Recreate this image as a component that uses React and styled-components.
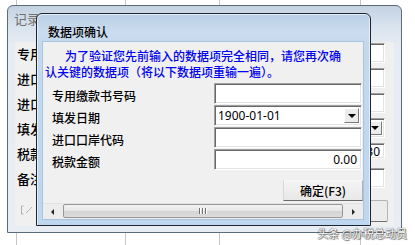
import React from "react";
import styled, { createGlobalStyle } from "styled-components";

const GlobalStyle = createGlobalStyle`
  html, body { margin: 0; padding: 0; background: #ffffff; }
  body { font-family: "Noto Sans CJK SC", "Noto Sans", sans-serif; }
  * { box-sizing: border-box; }
`;

const Stage = styled.div`
  position: relative;
  width: 415px;
  height: 245px;
  overflow: hidden;
  background: #ffffff;
`;

const Sheet = styled.div`
  display: flex;
  height: 100%;
`;

const SheetCol = styled.div`
  width: ${(p) => p.$w}px;
  height: 100%;
  border-right: ${(p) => (p.$last ? "none" : "1px solid #c6c6c6")};
  flex: ${(p) => (p.$last ? "1" : "none")};
`;

/* ---------- outer window ---------- */
const OuterWindow = styled.div`
  position: absolute;
  left: 7px;
  top: 5px;
  width: 395px;
  height: 228px;
  border: 1px solid #5d6c7b;
  border-radius: 6px 6px 0 0;
  background: linear-gradient(180deg, #c3d2e2 0px, #d9e3ee 20px, #e6ecf3 40px, #e8edf3 100%);
  display: flex;
  flex-direction: column;
`;

const OuterTitle = styled.div`
  height: 36px;
  padding: 5px 0 0 6px;
  font-size: 13px;
  line-height: 16px;
  color: #6f6f6f;
`;

const OuterBody = styled.div`
  flex: 1;
  margin: 0 7px 6px 7px;
  background: #f0f0f0;
  display: flex;
  flex-direction: column;
  padding: 1px 9px 0 2px;
`;

const OuterRows = styled.div`
  display: grid;
  grid-template-columns: 60px 1fr;
  grid-auto-rows: 20px;
  row-gap: 5px;
`;

const OuterLabel = styled.div`
  font-size: 13px;
  font-weight: 500;
  line-height: 20px;
  color: #000;
  padding-top: 1px;
`;

const OuterFoot = styled.div`
  margin-top: 12px;
  display: flex;
  align-items: flex-start;
  justify-content: space-between;
  margin-right: -3px;
`;

const FootIcon = styled.svg`
  margin: 5px 0 0 3px;
`;

const OuterButton = styled.div`
  width: 90px;
  height: 22px;
  background: #ececec;
  border: 1px solid #b4b4b4;
  border-bottom-color: #707070;
  border-radius: 2px;
`;

/* ---------- shared fields ---------- */
const Field = styled.div`
  position: relative;
  height: ${(p) => p.$h || 21}px;
  background: #ffffff;
  border-top: 1px solid #a0a0a0;
  border-left: 1px solid #a0a0a0;
  border-right: 1px solid #ffffff;
  border-bottom: 1px solid #ffffff;
  box-shadow: inset 1px 1px 0 #696969, inset -1px -1px 0 #e3e3e3;
  display: flex;
  align-items: center;
  justify-content: ${(p) => (p.$right ? "flex-end" : "flex-start")};
  padding: 0 ${(p) => (p.$right ? 4 : 3)}px 0 3px;
  font-family: "Noto Sans", "Noto Sans CJK SC", sans-serif;
  font-size: 12px;
  color: #000;
`;

const DropButton = styled.div`
  position: absolute;
  right: 2px;
  top: 2px;
  bottom: 2px;
  width: 15px;
  background: #ececec;
  border-top: 1px solid #ffffff;
  border-left: 1px solid #ffffff;
  border-right: 1px solid #7a7a7a;
  border-bottom: 1px solid #7a7a7a;
  display: flex;
  align-items: center;
  justify-content: center;
`;

const Arrow = styled.span`
  width: 0;
  height: 0;
  border-left: 4px solid transparent;
  border-right: 4px solid transparent;
  border-top: 4px solid #000;
`;

/* ---------- dialog ---------- */
const Dialog = styled.div`
  position: absolute;
  left: 36px;
  top: 13px;
  width: 335px;
  height: 213px;
  border: 1px solid #1c2531;
  border-radius: 6px 6px 0 0;
  background: linear-gradient(180deg, #b9cfe6 0px, #cbdcee 18px, #c4d9ee 30px, #bed6ee 100%);
  display: flex;
  flex-direction: column;
  box-shadow: inset 1px 1px 0 #e3eef9, inset -1px 0 0 #e3eef9;
`;

const DialogTitle = styled.div`
  height: 28px;
  padding: 10px 0 0 11px;
  font-size: 12px;
  font-weight: 500;
  line-height: 16px;
  color: #000;
`;

const DialogClient = styled.div`
  margin: 0 7px 6px 6px;
  flex: 1;
  display: flex;
  flex-direction: column;
  background: #f0f0f0;
  box-shadow: 0 0 0 1px #a8c4df;
`;

const DialogBody = styled.div`
  height: 161px;
  display: flex;
  flex-direction: column;
`;

const Notice = styled.p`
  margin: 6px 0 0 0;
  padding-left: 2px;
  width: 304px;
  text-indent: 20px;
  font-size: 12px;
  font-weight: 500;
  line-height: 16px;
  color: #0000f0;
`;

const Form = styled.div`
  margin-top: 3px;
  display: grid;
  grid-template-columns: 162px 148px;
  grid-auto-rows: 21px;
  row-gap: 1px;
  padding-left: 9px;
`;

const FormLabel = styled.div`
  font-size: 12px;
  font-weight: 500;
  line-height: 16px;
  padding-top: 5px;
  color: #000;
`;

const Actions = styled.div`
  margin-top: 10px;
  display: flex;
  justify-content: flex-end;
`;

const Button = styled.div`
  width: 80px;
  height: 21px;
  display: flex;
  align-items: center;
  justify-content: center;
  font-size: 12px;
  font-weight: 500;
  color: #000;
  background: linear-gradient(180deg, #f4f4f4, #e8e8e8);
  border-top: 1px solid #f8f8f8;
  border-left: 1px solid #d8d8d8;
  border-right: 1px solid #b0b0b0;
  border-bottom: 1px solid #6a6a6a;
`;

const ScrollBar = styled.div`
  height: 16px;
  display: flex;
  align-items: stretch;
  background: #ececec;
  border-top: 1px solid #e2e2e2;
`;

const ScrollArrow = styled.div`
  width: 19px;
  display: flex;
  align-items: center;
  justify-content: center;
`;

const TriLeft = styled.span`
  width: 0;
  height: 0;
  border-top: 3px solid transparent;
  border-bottom: 3px solid transparent;
  border-right: 3px solid #222;
`;

const TriRight = styled.span`
  width: 0;
  height: 0;
  border-top: 3px solid transparent;
  border-bottom: 3px solid transparent;
  border-left: 3px solid #222;
`;

const Thumb = styled.div`
  flex: 1;
  margin: 0 1px 1px 1px;
  border: 1px solid #979797;
  border-radius: 2px;
  background: linear-gradient(180deg, #f2f2f2 0%, #e6e6e6 50%, #d4d4d4 51%, #dcdcdc 100%);
  display: flex;
  align-items: center;
  justify-content: center;
  gap: 1px;
`;

const Grip = styled.span`
  width: 1px;
  height: 6px;
  background: #707070;
  box-shadow: 1px 0 0 #ffffff;
  margin-right: 1px;
`;

const Watermark = styled.div`
  position: absolute;
  right: 8px;
  bottom: 6px;
  font-size: 11px;
  line-height: 12px;
  color: #ffffff;
  text-shadow: 0 0 1px #555, 0 0 1px #555, 1px 1px 1px #777;
  white-space: nowrap;
`;

const rowsOuter = ["专用", "进口", "进口", "填发", "税款", "备注"];

export default function App() {
  return (
    <>
      <GlobalStyle />
      <Stage>
        <Sheet>
          <SheetCol $w={17} />
          <SheetCol $w={109} />
          <SheetCol $w={94} />
          <SheetCol $w={141} />
          <SheetCol $last />
        </Sheet>

        <OuterWindow>
          <OuterTitle>记录信息</OuterTitle>
          <OuterBody>
            <OuterRows>
              {rowsOuter.map((l, i) => (
                <React.Fragment key={i}>
                  <OuterLabel>{l}</OuterLabel>
                  <Field $h={i === 4 ? 16 : 20} $right={i === 4}>
                    {i === 4 ? "130" : null}
                    {i === 3 ? (
                      <DropButton>
                        <Arrow />
                      </DropButton>
                    ) : null}
                  </Field>
                </React.Fragment>
              ))}
            </OuterRows>
            <OuterFoot>
              <FootIcon width="14" height="10" viewBox="0 0 14 10">
                <path d="M3.5 1 H1.5 V9 H3.5" fill="none" stroke="#b0b0b0" strokeWidth="1" />
                <path d="M6 8 L12 2" stroke="#b8b8b8" strokeWidth="1" />
              </FootIcon>
              <OuterButton />
            </OuterFoot>
          </OuterBody>
        </OuterWindow>

        <Dialog>
          <DialogTitle>数据项确认</DialogTitle>
          <DialogClient>
            <DialogBody>
              <Notice>
                为了验证您先前输入的数据项完全相同，请您再次确认关键的数据项（将以下数据项重输一遍）。
              </Notice>
              <Form>
                <FormLabel>专用缴款书号码</FormLabel>
                <Field />
                <FormLabel>填发日期</FormLabel>
                <Field>
                  1900-01-01
                  <DropButton>
                    <Arrow />
                  </DropButton>
                </Field>
                <FormLabel>进口口岸代码</FormLabel>
                <Field />
                <FormLabel>税款金额</FormLabel>
                <Field $right>0.00</Field>
              </Form>
              <Actions>
                <Button>确定(F3)</Button>
              </Actions>
            </DialogBody>
            <ScrollBar>
              <ScrollArrow>
                <TriLeft />
              </ScrollArrow>
              <Thumb>
                <Grip />
                <Grip />
                <Grip />
              </Thumb>
              <ScrollArrow>
                <TriRight />
              </ScrollArrow>
            </ScrollBar>
          </DialogClient>
        </Dialog>

        <Watermark>头条 @办税总动员</Watermark>
      </Stage>
    </>
  );
}
